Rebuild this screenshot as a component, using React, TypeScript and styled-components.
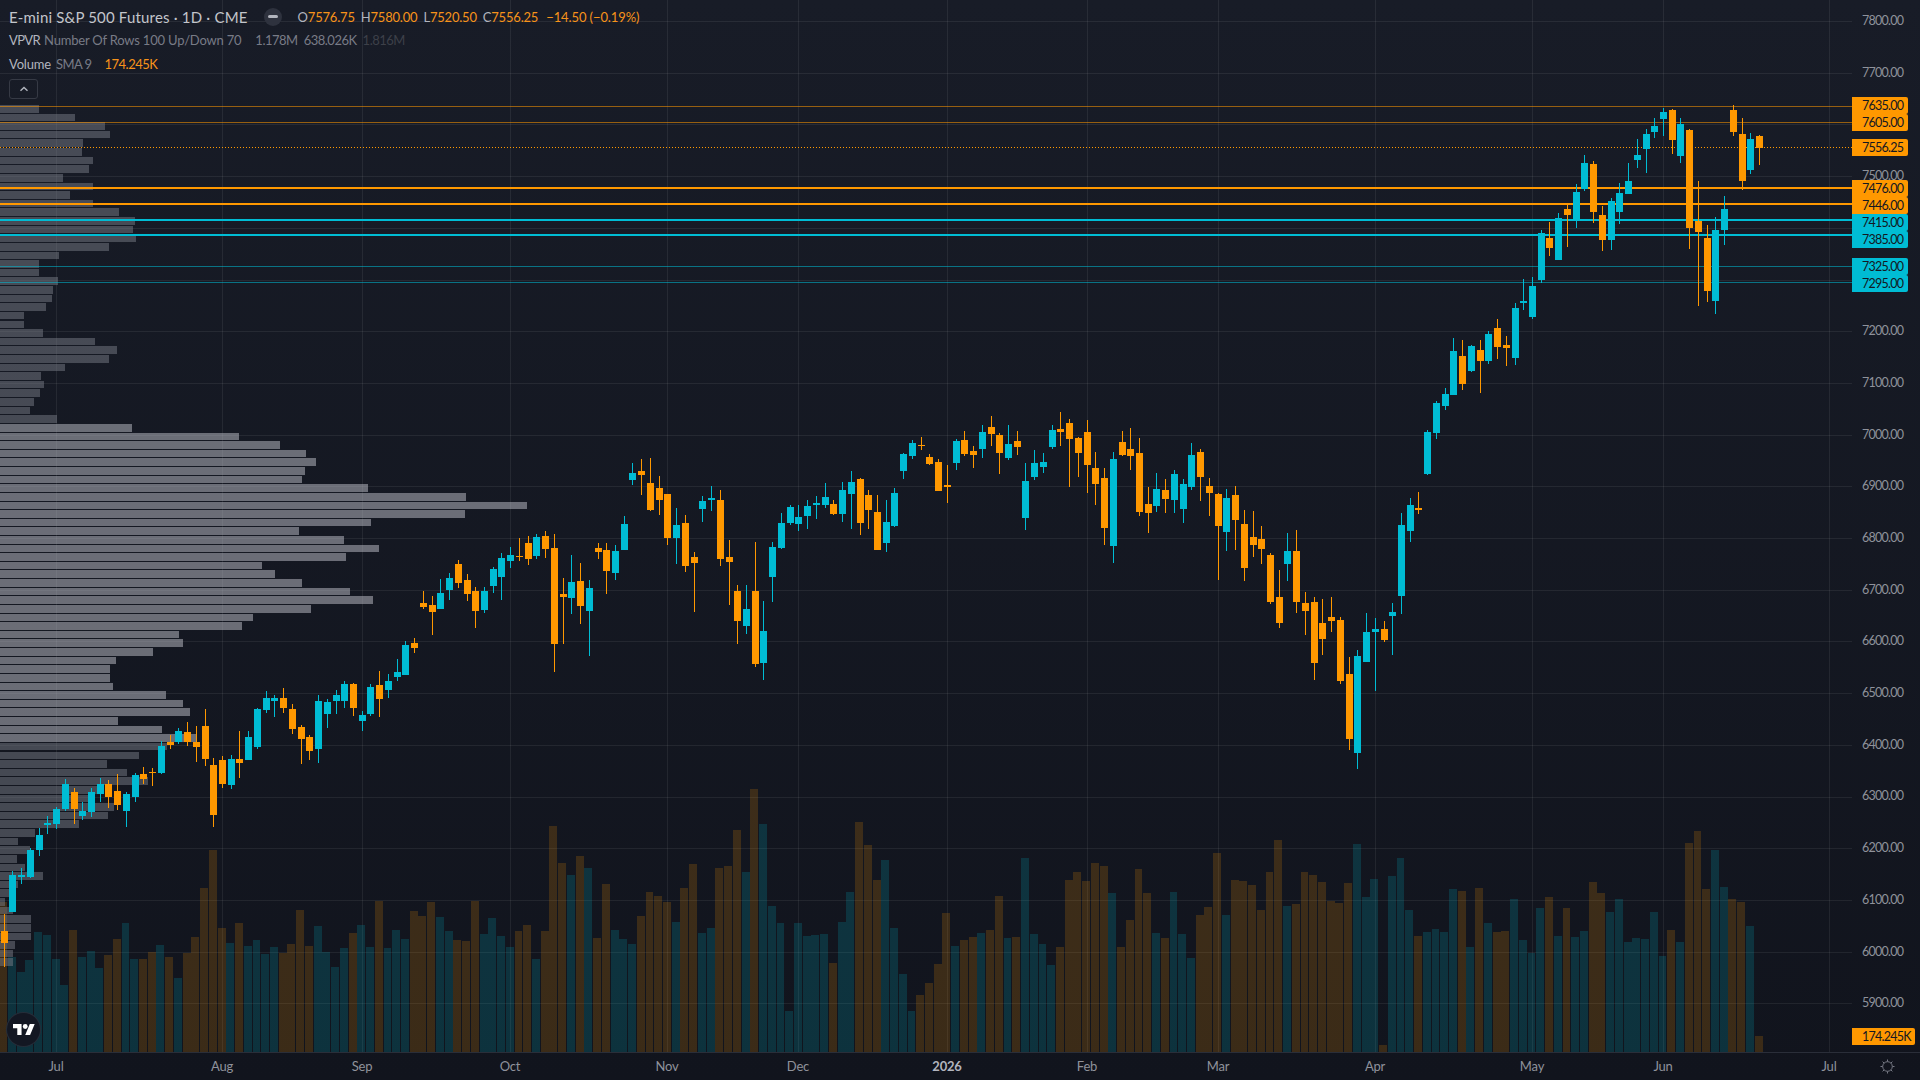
import React from 'react';
import styled, {createGlobalStyle} from 'styled-components';

type Row = number[]; // [up, high, bodyTop, bodyBottom, low]

// candle rows are read off at a given origin and scale, toPx turns them into chart pixels
const toPx = (y0: number, scale: number, rows: Row[]): Row[] =>
  rows.map(([up, ...ys]) => [up, ...ys.map(y => y0 + y / scale)]);

const candles: Row[] = [
  ...toPx(420, 2.8, [
    [0,1384,1431,1464,1532],[1,1262,1274,1378,1378],[1,1254,1274,1280,1298],[1,1198,1204,1280,1282],
    [1,1142,1162,1204,1220],[1,1109,1128,1134,1159],[1,1084,1089,1131,1145],[1,1005,1019,1089,1095],
    [0,1030,1042,1089,1131],[1,1070,1095,1109,1120],[1,1030,1042,1098,1112],[1,1002,1019,1047,1070],
    [0,1008,1019,1056,1086],[0,991,1039,1078,1092],[1,1042,1047,1095,1140],[1,988,994,1056,1070],
    [0,972,991,1005,1019],[0,974,986,988,1025],[1,900,913,988,991],[0,882,902,910,921],
    [1,862,871,902,907],[0,846,874,902,913],[0,857,902,916,958],[0,809,857,949,969],
    [0,946,966,1106,1140],[0,941,952,1019,1030],[1,938,949,1022,1033],[0,871,949,960,1002],
    [1,871,888,952,952],[1,806,809,916,921],[1,759,778,812,820],[1,770,778,787,832],
    [0,750,778,806,820],[0,795,809,865,879],[0,854,860,893,963],[0,882,888,927,952],
    [1,770,787,921,960],[1,781,790,823,862],[1,756,770,787,823],[1,731,739,787,806],
    [0,736,739,806,829],[1,815,826,843,871],[1,739,748,823,829],[0,703,742,781,832],
    [1,711,731,756,778],[1,669,706,720,731],[1,619,630,714,714],[0,610,624,638,652],
    [0,479,512,524,529],[0,493,518,538,602],[1,445,484,529,529],[1,428,442,476,504],
    [0,392,403,456,470],[0,431,448,487,507],[0,468,479,535,582],[1,468,479,532,540],
    [1,412,417,465,484],[1,372,386,440,504],[1,356,378,395,414],[0,330,381,384,395],
    [0,325,344,389,406],[1,319,328,381,389],[0,311,325,361,386],[0,319,358,627,706],
  ]),
  ...toPx(400, 3, [
    [0,534,582,591,732],[1,465,546,594,642],[0,489,543,618,672],[1,540,564,633,768],
    [0,429,444,456,477],[0,429,450,513,582],[1,435,453,519,540],[1,348,372,450,450],
    [1,189,219,240,255],[0,177,213,225,285],[0,174,249,330,333],[0,228,264,300,345],
    [0,282,282,414,435],[1,324,375,414,492],[0,345,369,498,516],[0,456,471,489,636],
    [1,288,303,327,366],[1,258,294,300,333],[0,270,300,477,498],[0,420,471,486,615],
    [0,555,573,663,732],[1,555,627,678,702],[0,426,573,792,801],[1,603,693,789,840],
    [1,426,441,531,606],[1,339,369,444,447],[1,315,321,369,375],[1,315,351,372,393],
    [1,300,318,348,387],[1,288,309,315,357],[1,249,291,315,324],[0,300,312,342,345],
    [1,246,270,342,366],[1,213,246,282,387],[0,234,237,369,405],[0,270,285,330,387],
    [0,285,336,450,450],[1,300,366,429,456],[1,264,279,378,381],[1,159,162,213,237],
    [1,120,129,168,177],[0,111,135,138,150],[0,162,171,192,195],[0,177,186,273,273],
    [0,195,255,261,309],[1,117,123,189,210],[0,93,120,162,168],[0,138,153,165,204],
    [1,75,96,147,174],[0,48,81,102,138],[0,99,105,159,222],[1,75,132,174,180],
    [0,93,123,141,165],[1,189,243,354,390],[1,150,189,231,240],
  ]),
  ...toPx(310, 3, [
    [1,429,456,471,489],[1,345,360,411,417],[0,306,357,366,408],[0,327,339,387,531],
    [0,381,384,429,501],[0,330,366,465,549],[0,426,474,522,585],[0,474,504,654,705],
    [1,426,447,708,759],[0,363,396,435,438],[0,354,417,438,480],[0,384,429,606,618],
    [0,531,582,609,669],[1,489,537,588,606],[0,507,540,567,609],[1,480,492,570,609],
    [1,507,522,597,639],[1,399,435,531,540],[0,417,426,501,573],[0,504,528,549,618],
    [0,549,552,648,810],[1,537,564,666,723],[0,528,555,630,720],[0,600,642,774,813],
    [0,603,681,705,741],[0,648,687,717,762],[0,729,735,876,882],[0,780,861,939,954],
    [1,669,723,762,813],[0,660,723,876,909],[0,846,879,903,975],[0,861,876,1059,1110],
    [0,867,939,987,1035],[0,861,921,933,966],[0,921,930,1113,1122],[0,1041,1092,1287,1320],
    [1,1020,1038,1329,1377],[1,909,966,1056,1056],[1,924,957,966,1143],[0,933,957,990,996],
    [1,879,906,918,1035],[1,609,645,858,912],[1,564,585,663,696],[0,546,594,600,612],
    [1,360,366,492,495],[1,273,279,369,387],[1,234,252,288,300],[1,84,123,255,255],
    [0,90,138,222,240],[1,105,108,183,186],[0,90,120,153,249],[1,63,72,153,162],
    [0,27,54,111,147],[0,78,105,114,168],
  ]),
  ...toPx(90, 3, [
    [1,639,654,804,825],[1,567,633,639,660],[1,561,588,681,687],[1,420,429,570,579],
    [0,396,444,474,498],[1,369,384,510,510],[0,345,357,375,471],[1,282,306,390,414],
    [1,195,219,297,303],[0,213,222,366,399],[0,348,375,450,483],[1,324,333,450,480],
    [1,279,309,366,402],[1,219,273,312,312],[1,147,195,210,234],[1,117,132,177,249],
    [1,84,108,126,144],[1,54,66,87,138],[0,57,60,150,192],[1,84,102,198,219],
    [0,117,120,414,477],[0,273,393,426,648],[0,405,444,603,636],[1,381,420,633,672],
    [1,318,357,420,465],[0,45,60,126,138],[0,84,132,273,300],[1,129,147,240,252],
    [0,135,138,174,225],
  ]),
];

const volumeTops = [
  902,957,972,960,932,935,959,985,930,957,951,968,955,939,923,959,959,952,945,957,978,953,937,888,850,928,943,923,946,940,954,947,
  953,944,910,946,926,952,967,948,933,925,947,901,948,930,939,911,916,902,917,931,940,941,901,934,918,936,947,931,925,959,931,826,
  863,875,856,868,938,884,930,939,944,916,892,896,902,922,888,864,933,928,868,866,830,872,789,824,906,923,1011,923,936,935,934,963,
  922,892,822,845,880,860,928,974,1011,995,983,964,913,946,940,937,933,930,896,938,937,858,934,944,965,947,880,872,881,863,866,893,
  947,920,869,893,933,938,892,934,958,915,907,853,915,880,881,885,910,872,840,906,904,872,875,882,901,903,883,844,897,879,1045,876,
  858,910,936,932,929,932,889,891,947,888,923,932,931,899,940,953,908,897,936,908,937,931,882,893,912,899,942,938,939,912,956,930,
  942,843,831,889,850,887,899,902,926,1036,
];

const profileWidths = [
  39,75,105,110,83,82,93,89,63,93,70,93,119,135,133,136,109,59,39,39,58,53,52,46,24,24,43,95,117,109,65,41,44,40,34,30,57,
  132,239,280,306,316,305,302,368,466,527,465,371,299,344,379,346,262,275,302,350,373,311,253,242,179,183,153,116,110,110,113,166,183,190,118,162,196,
  167,139,107,127,148,104,93,114,108,79,35,18,30,17,25,43,18,9,5,13,31,31,31,15,13,13,
];

const levels = [
  {price: '7635.00', y: 106, tagTop: 97, thick: false, up: false},
  {price: '7605.00', y: 122, tagTop: 114, thick: false, up: false},
  {price: '7476.00', y: 188, tagTop: 180, thick: true, up: false},
  {price: '7446.00', y: 204, tagTop: 197, thick: true, up: false},
  {price: '7415.00', y: 220, tagTop: 214, thick: true, up: true},
  {price: '7385.00', y: 235, tagTop: 231, thick: true, up: true},
  {price: '7325.00', y: 266, tagTop: 258, thick: false, up: true},
  {price: '7295.00', y: 282, tagTop: 275, thick: false, up: true},
];

const months = [
  {label: 'Jul', x: 56},{label: 'Aug', x: 222},{label: 'Sep', x: 362},{label: 'Oct', x: 510},
  {label: 'Nov', x: 667},{label: 'Dec', x: 798},{label: '2026', x: 947, strong: true},{label: 'Feb', x: 1087},
  {label: 'Mar', x: 1218},{label: 'Apr', x: 1375},{label: 'May', x: 1532},{label: 'Jun', x: 1663},{label: 'Jul', x: 1829},
];

const priceTicks = Array.from({length: 20}, (_, i) => 7800 - i * 100);
// these sit fully behind a price tag
const coveredTicks = [7600, 7400, 7300];

const ORANGE = '#ff9800';
const CYAN = '#00bcd4';
const PLOT_W = 1852;
const PLOT_H = 1052;
const BAR_STEP = 8.733;
const barX = (i: number) => 3.7 + i * BAR_STEP;
const tickY = (i: number) => 21 + i * 51.7;

const GlobalStyle = createGlobalStyle`
  html, body {
    margin: 0;
    padding: 0;
    background: #141822;
  }
  body {
    font-family: Lato, "Liberation Sans", sans-serif;
    overflow: hidden;
  }
`;

const Page = styled.div`
  width: 1920px;
  height: 1080px;
  display: grid;
  grid-template-columns: ${PLOT_W}px 1fr;
  grid-template-rows: ${PLOT_H}px 1fr;
  background: linear-gradient(#181c27, #11141d);
  overflow: hidden;
`;

const ChartPane = styled.div`
  position: relative;
  overflow: hidden;
`;

const Plot = styled.svg`
  display: block;
`;

const Legend = styled.div`
  position: absolute;
  top: 5px;
  left: 9px;
  display: flex;
  flex-direction: column;
  align-items: flex-start;
`;

const LegendRow = styled.div`
  height: 23.5px;
  display: flex;
  align-items: center;
  font-size: 13px;
  letter-spacing: -0.2px;
  color: #787b86;
  white-space: nowrap;
`;

const Title = styled.span`
  font-size: 15px;
  letter-spacing: 0.18px;
  color: #c3c5cb;
`;

const StudyName = styled.span<{$tight?: boolean}>`
  color: #b2b5be;
  margin-right: ${p => (p.$tight ? '4px' : '5px')};
  letter-spacing: ${p => (p.$tight ? '-0.6px' : '-0.2px')};
`;

const StudyValue = styled.span<{$dim?: boolean; $accent?: boolean; $first?: boolean}>`
  margin-left: ${p => (p.$accent ? '13px' : p.$first ? '14px' : '6px')};
  letter-spacing: -0.5px;
  color: ${p => (p.$accent ? '#f7931a' : p.$dim ? '#3d4049' : '#787b86')};
`;

const SmaLabel = styled.span`
  letter-spacing: -0.55px;
`;

const StatusDot = styled.span`
  width: 18px;
  height: 18px;
  margin: 0 16px;
  border-radius: 50%;
  background: #2e323e;
  display: flex;
  align-items: center;
  justify-content: center;

  &::after {
    content: '';
    width: 10px;
    height: 3px;
    border-radius: 2px;
    background: #b2b5be;
  }
`;

const Ohlc = styled.span`
  color: #b2b5be;
  margin-right: 6px;

  > b {
    font-weight: 400;
    color: #f7931a;
  }
`;

const Change = styled.span`
  color: #f7931a;
  margin-left: 2px;
  letter-spacing: -0.1px;
`;

const CollapseButton = styled.button`
  width: 29px;
  height: 20px;
  margin-top: 3.5px;
  padding: 0;
  border: 1px solid #363a45;
  border-radius: 3px;
  background: transparent;
  display: flex;
  align-items: center;
  justify-content: center;
`;

const LogoBadge = styled.div`
  position: absolute;
  left: 7px;
  top: 1013px;
  width: 33px;
  height: 33px;
  border-radius: 50%;
  background: #131722;
  box-shadow: 0 0 0 1px #262d39;
  display: flex;
  align-items: center;
  justify-content: center;
`;

const PriceAxis = styled.div`
  position: relative;
  font-size: 12.5px;
  letter-spacing: -0.75px;
`;

const PriceTicks = styled.div`
  display: flex;
  flex-direction: column;
  margin-top: -4.85px;
`;

const PriceTick = styled.div`
  height: 51.7px;
  line-height: 51.7px;
  padding-left: 10px;
  color: #8f929b;
`;

const PriceTag = styled.div<{$up?: boolean; $wide?: boolean}>`
  position: absolute;
  left: 0;
  height: 17px;
  line-height: 17px;
  width: ${p => (p.$wide ? '63px' : '56px')};
  padding-left: 10px;
  box-sizing: border-box;
  border-radius: 0 2px 2px 0;
  background: ${p => (p.$up ? CYAN : ORANGE)};
  color: #131722;
`;

const TimeAxis = styled.div`
  position: relative;
  border-top: 1px solid #2a2e39;
`;

const TimeLabel = styled.span<{$strong?: boolean}>`
  position: absolute;
  top: 5px;
  transform: translateX(-50%);
  font-size: 13px;
  letter-spacing: -0.2px;
  font-weight: ${p => (p.$strong ? 700 : 400)};
  color: ${p => (p.$strong ? '#b2b5be' : '#8f929b')};
`;

const AxisCorner = styled.div`
  border-top: 1px solid #2a2e39;
  display: flex;
  align-items: center;
  justify-content: center;
  padding-left: 2px;
`;

const Candle = ({row, i}: {row: Row; i: number}) => {
  const [up, high, top, bottom, low] = row;
  const x = Math.round(barX(i));
  const fill = up ? CYAN : ORANGE;
  return (
    <g fill={fill}>
      <rect x={x} y={high} width={1} height={low - high} />
      <rect x={x - 3} y={top} width={7} height={Math.max(bottom - top, 1)} />
    </g>
  );
};

const Chart = () => (
  <Plot width={PLOT_W} height={PLOT_H} shapeRendering="crispEdges">
    {priceTicks.map((_, i) => (
      <rect key={i} x={0} y={Math.round(tickY(i))} width={PLOT_W} height={1} fill="rgba(255,255,255,0.07)" />
    ))}
    {months.map(m => (
      <rect key={m.x} x={m.x} y={0} width={1} height={PLOT_H} fill="rgba(255,255,255,0.07)" />
    ))}

    {candles.map((row, i) => {
      const x = Math.floor(barX(i) - 3.9);
      return (
        <rect
          key={i}
          x={x}
          y={volumeTops[i]}
          width={Math.ceil(barX(i) + 3) - x}
          height={PLOT_H - volumeTops[i]}
          fill={row[0] ? 'rgba(0,188,212,0.18)' : 'rgba(255,152,0,0.18)'}
        />
      );
    })}

    {profileWidths.map((w, i) => {
      const inValueArea = i >= 37 && i <= 73;
      return (
        <rect
          key={i}
          x={0}
          y={105 + i * 8.62}
          width={w}
          height={7.6}
          fill={inValueArea ? 'rgba(178,181,190,0.55)' : 'rgba(120,123,134,0.5)'}
        />
      );
    })}

    {levels.map(l => (
      <rect
        key={l.price}
        x={0}
        y={l.thick ? l.y - 1 : l.y}
        width={PLOT_W}
        height={l.thick ? 2 : 1}
        fill={l.up ? CYAN : ORANGE}
        opacity={l.thick ? 1 : 0.55}
      />
    ))}
    <line x1={0} x2={PLOT_W} y1={147.5} y2={147.5} stroke={ORANGE} strokeDasharray="1 2" />

    {candles.map((row, i) => (
      <Candle key={i} row={row} i={i} />
    ))}
  </Plot>
);

const App: React.FC = () => (
  <Page>
    <GlobalStyle />
    <ChartPane>
      <Chart />
      <Legend>
        <LegendRow>
          <Title>E-mini S&amp;P 500 Futures · 1D · CME</Title>
          <StatusDot />
          <Ohlc>O<b>7576.75</b></Ohlc>
          <Ohlc>H<b>7580.00</b></Ohlc>
          <Ohlc>L<b>7520.50</b></Ohlc>
          <Ohlc>C<b>7556.25</b></Ohlc>
          <Change>−14.50 (−0.19%)</Change>
        </LegendRow>
        <LegendRow>
          <StudyName $tight>VPVR</StudyName>
          Number Of Rows 100 Up/Down 70
          <StudyValue $first>1.178M</StudyValue>
          <StudyValue>638.026K</StudyValue>
          <StudyValue $dim>1.816M</StudyValue>
        </LegendRow>
        <LegendRow>
          <StudyName>Volume</StudyName>
          <SmaLabel>SMA 9</SmaLabel>
          <StudyValue $accent>174.245K</StudyValue>
        </LegendRow>
        <CollapseButton>
          <svg width="10" height="6" viewBox="0 0 10 6" fill="none">
            <path d="M1.5 4.8 5 1.4l3.5 3.4" stroke="#b2b5be" strokeWidth="1.4" />
          </svg>
        </CollapseButton>
      </Legend>
      <LogoBadge>
        <svg width="22" height="11" viewBox="0 4 36 18" fill="#fff">
          <path d="M14 22H7V11H0V4h14v18zM28 22h-8l7.5-18h8L28 22z" />
          <circle cx="20" cy="8" r="4" />
        </svg>
      </LogoBadge>
    </ChartPane>

    <PriceAxis>
      <PriceTicks>
        {priceTicks.map(p => (
          <PriceTick key={p}>{coveredTicks.includes(p) ? '' : `${p}.00`}</PriceTick>
        ))}
      </PriceTicks>
      {levels.map(l => (
        <PriceTag key={l.price} $up={l.up} style={{top: l.tagTop}}>{l.price}</PriceTag>
      ))}
      <PriceTag style={{top: 139}}>7556.25</PriceTag>
      <PriceTag $wide style={{top: 1028}}>174.245K</PriceTag>
    </PriceAxis>

    <TimeAxis>
      {months.map(m => (
        <TimeLabel key={m.x} $strong={m.strong} style={{left: m.x}}>{m.label}</TimeLabel>
      ))}
    </TimeAxis>
    <AxisCorner>
      <svg width="15" height="15" viewBox="0 0 15 15" fill="none" stroke="#787b86" strokeWidth="1">
        <circle cx="7.5" cy="7.5" r="4.8" />
        <path d="M7.5 0.5v2M7.5 12.5v2M0.5 7.5h2M12.5 7.5h2M2.6 2.6l1.4 1.4M11 11l1.4 1.4M2.6 12.4 4 11M11 4l1.4-1.4" />
      </svg>
    </AxisCorner>
  </Page>
);

export default App;
